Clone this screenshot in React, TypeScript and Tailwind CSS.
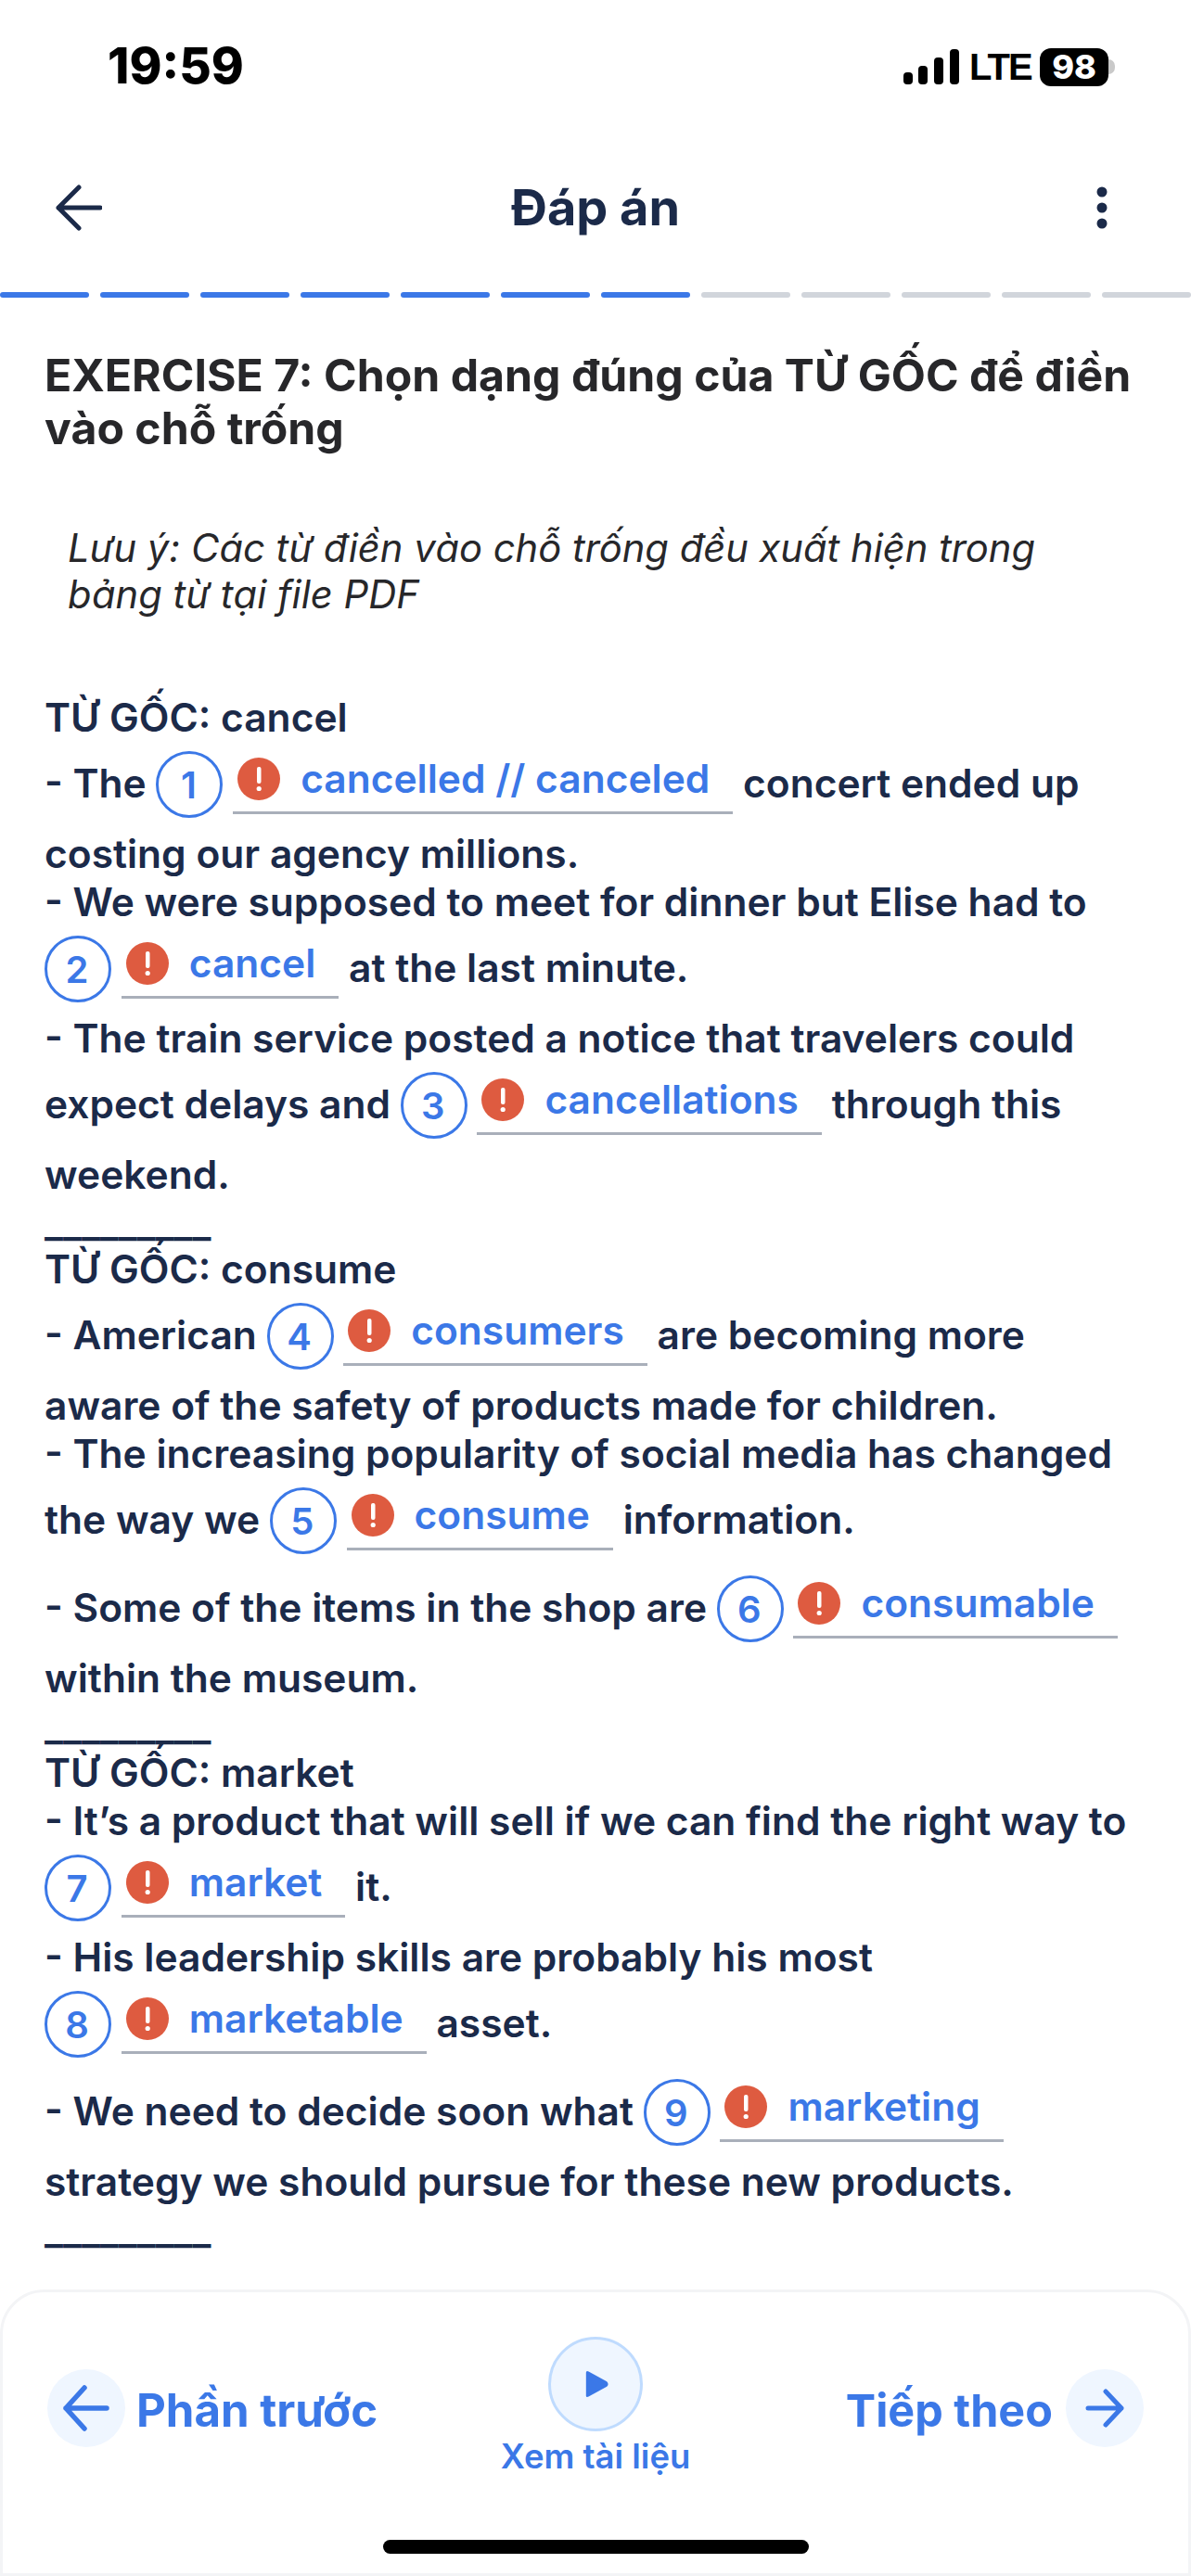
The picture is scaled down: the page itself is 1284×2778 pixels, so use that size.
import React from "react"

const Blank = ({ n, text }: { n: number; text: string }) => {
  return (
    <span className="inline-block whitespace-nowrap">
      <span className="inline-flex justify-center items-center w-[72px] h-[72px] mt-[10px] mb-[13px] rounded-full border-[3px] border-[#3b78e7] text-[#3b78e7] text-[40px] leading-[52px]">
        <span className="translate-y-[1px] -translate-x-[1px]">{n}</span>
      </span>{" "}
      <span className="inline-flex items-center pl-[5px] pr-[25px] pb-[9px] mt-[10px] border-b-[3px] border-[#a9afba] align-[-3px]">
        <svg width="46" height="46" viewBox="0 0 46 46" className="mr-[22px] shrink-0">
          <circle cx="23" cy="23" r="23" fill="#de5b40" />
          <rect x="21" y="10" width="4.5" height="18" rx="2" fill="#fff" />
          <circle cx="23.2" cy="33.5" r="2.6" fill="#fff" />
        </svg>
        <span className="text-[#3b78e7]">{text}</span>
      </span>
    </span>
  )
}

const Separator = () => <div className="h-[50px]">_________</div>

const App: React.FC = () => {
  const segments = [1, 2, 3, 4, 5, 6, 7, 8, 9, 10, 11, 12]

  return (
    <div className="flex flex-col w-[1284px] h-[2778px] bg-white overflow-hidden font-['Inter',sans-serif] text-[#1b2a49]">
      {/* status bar */}
      <div className="flex justify-between items-center h-[144px] pl-[116px] pr-[82px] text-black">
        <span className="text-[53px] font-extrabold">19:59</span>
        <div className="flex items-center">
          <svg width="60" height="38" viewBox="0 0 60 38" className="mr-[11px]">
            <rect x="0" y="25" width="10" height="13" rx="4" fill="#000" />
            <rect x="16" y="18" width="10" height="20" rx="4" fill="#000" />
            <rect x="33" y="9" width="10" height="29" rx="4" fill="#000" />
            <rect x="50" y="0" width="10" height="38" rx="4" fill="#000" />
          </svg>
          <span className="w-[64px] text-[40px] leading-none font-bold font-['Liberation_Sans',sans-serif] tracking-[-2px] mr-[12px]">LTE</span>
          <span className="flex justify-center items-center w-[74px] h-[41px] rounded-[12px] bg-black text-white text-[36px] leading-none font-extrabold">98</span>
          <span className="w-[7px] h-[16px] rounded-r-full bg-[#c9c9c9]"></span>
        </div>
      </div>

      {/* nav */}
      <div className="grid grid-cols-[1fr_auto_1fr] items-center h-[160px] px-[60px]">
        <svg width="50" height="50" viewBox="0 0 50 50" fill="none" stroke="#1b2a49" strokeWidth="5" strokeLinecap="round" strokeLinejoin="round">
          <path d="M48 25H3M25 3L3 25L25 47" />
        </svg>
        <h1 className="text-[54px] font-bold leading-none">Đáp án</h1>
        <svg width="12" height="50" viewBox="0 0 12 50" fill="#1b2a49" className="justify-self-end mr-[30px]">
          <circle cx="6" cy="8" r="5.5" />
          <circle cx="6" cy="25" r="5.5" />
          <circle cx="6" cy="42" r="5.5" />
        </svg>
      </div>

      {/* progress */}
      <div className="flex gap-[12px] h-[6px] mt-[11px]">
        {segments.map((s) => (
          <div key={s} className={s <= 7 ? "flex-1 rounded-full bg-[#3b78e7]" : "flex-1 rounded-full bg-[#d1d5db]"}></div>
        ))}
      </div>

      {/* content */}
      <div className="flex-1 min-h-0 pt-[55px] px-[48px] text-[42.5px] leading-[52px] font-semibold">
        <h2 className="text-[48.2px] leading-[57px] font-bold text-[#27272a]">
          EXERCISE 7: Chọn dạng đúng của TỪ GỐC để điền vào chỗ trống
        </h2>
        <p className="mt-[76px] ml-[25px] text-[41.7px] leading-[50px] font-normal italic text-[#27272a]">
          Lưu ý: Các từ điền vào chỗ trống đều xuất hiện trong
          <br />
          bảng từ tại file PDF
        </p>

        <div className="mt-[82px]">
          <div>TỪ GỐC: cancel</div>
          <div>- The <Blank n={1} text="cancelled // canceled" /> concert ended up costing our agency millions.</div>
          <div>- We were supposed to meet for dinner but Elise had to <Blank n={2} text="cancel" /> at the last minute.</div>
          <div>- The train service posted a notice that travelers could expect delays and <Blank n={3} text="cancellations" /> through this weekend.</div>
          <Separator />
          <div>TỪ GỐC: consume</div>
          <div>- American <Blank n={4} text="consumers" /> are becoming more aware of the safety of products made for children.</div>
          <div>- The increasing popularity of social media has changed the way we <Blank n={5} text="consume" /> information.</div>
          <div>- Some of the items in the shop are <Blank n={6} text="consumable" /> within the museum.</div>
          <Separator />
          <div>TỪ GỐC: market</div>
          <div>- It’s a product that will sell if we can find the right way to <Blank n={7} text="market" /> it.</div>
          <div>- His leadership skills are probably his most <Blank n={8} text="marketable" /> asset.</div>
          <div>- We need to decide soon what <Blank n={9} text="marketing" /> strategy we should pursue for these new products.</div>
          <Separator />
        </div>
      </div>

      {/* footer */}
      <div className="flex flex-col h-[309px] shrink-0 rounded-t-[48px] border-[3px] border-[#f3f4f6] text-[#3b78e7]">
        <div className="grid grid-cols-[1fr_auto_1fr] items-start pt-[48px] pl-[48px] pr-[48px]">
          <div className="flex items-center gap-[12px] mt-[35px] justify-self-start">
            <span className="flex justify-center items-center w-[84px] h-[84px] rounded-full bg-[#eff6ff]">
              <svg width="50" height="50" viewBox="0 0 50 50" fill="none" stroke="#3b78e7" strokeWidth="5.5" strokeLinecap="round" strokeLinejoin="round">
                <path d="M47 25H3M23 3L3 25L23 47" />
              </svg>
            </span>
            <span className="mt-[6px] text-[49.2px] font-bold leading-none">Phần trước</span>
          </div>
          <div className="flex flex-col items-center">
            <span className="flex justify-center items-center w-[102px] h-[102px] rounded-full bg-[#eff6ff] border-[3px] border-[#bfdbfe]">
              <svg width="28" height="30" viewBox="0 0 30 32" fill="#3b78e7" className="ml-[2px]">
                <path d="M3 3Q3 0 6 1.5L27 13Q30 16 27 19L6 30.5Q3 32 3 29Z" />
              </svg>
            </span>
            <span className="mt-[5px] text-[36.5px] leading-[44px] font-semibold">Xem tài liệu</span>
          </div>
          <div className="flex items-center gap-[14px] mt-[35px] justify-self-end">
            <span className="mt-[6px] text-[48.5px] font-bold leading-none">Tiếp theo</span>
            <span className="flex justify-center items-center w-[84px] h-[84px] rounded-full bg-[#eff6ff]">
              <svg width="42" height="42" viewBox="0 0 42 42" fill="none" stroke="#3b78e7" strokeWidth="5" strokeLinecap="round" strokeLinejoin="round">
                <path d="M3 21H39M22 3L39 21L22 39" />
              </svg>
            </span>
          </div>
        </div>
        <div className="mt-auto mb-[21px] self-center w-[459px] h-[15px] rounded-full bg-black"></div>
      </div>
    </div>
  )
}

export default App
